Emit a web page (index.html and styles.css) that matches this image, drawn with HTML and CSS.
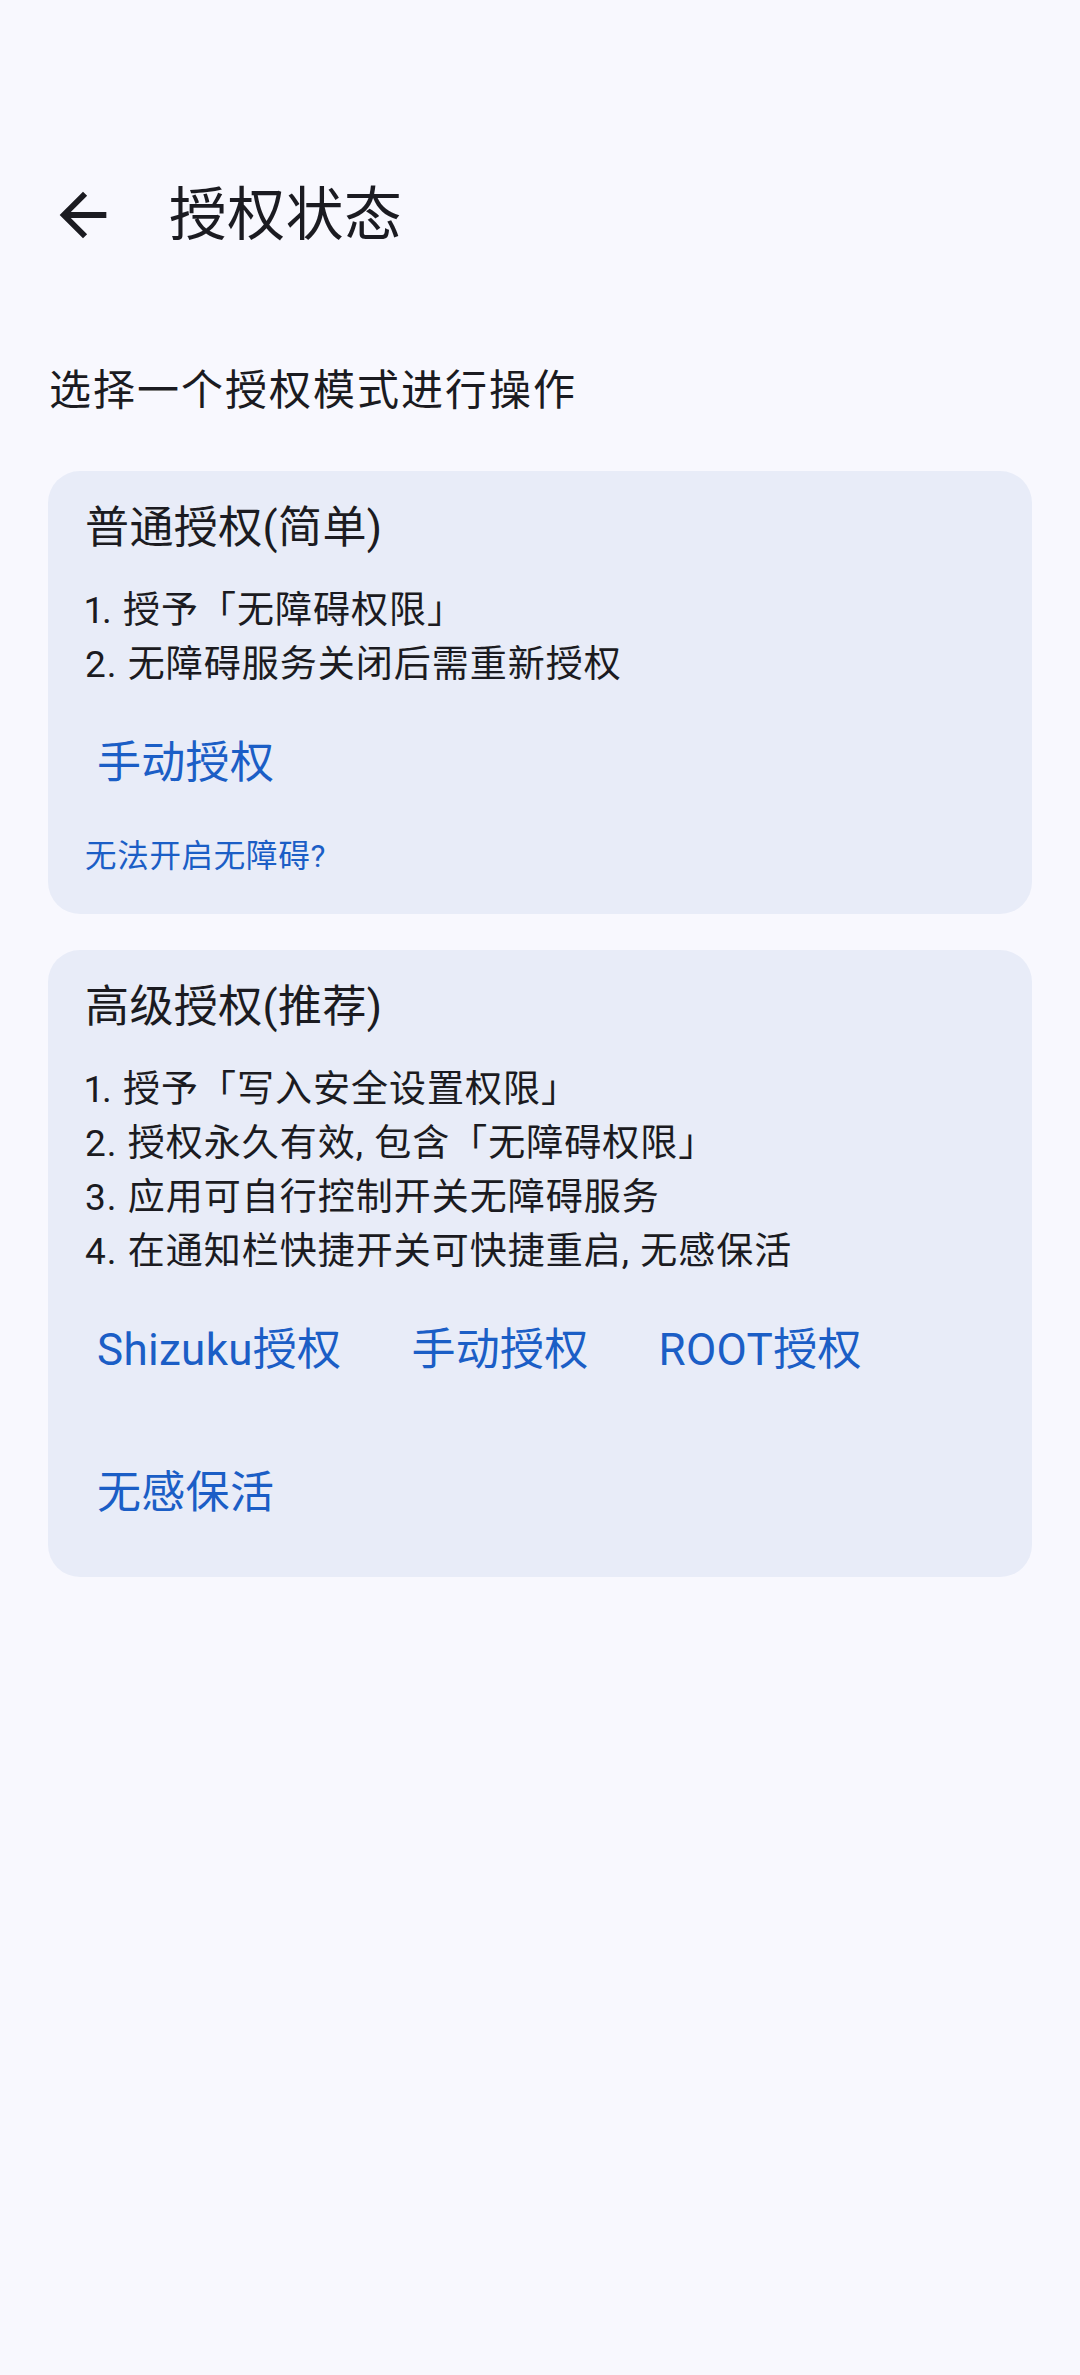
FILE: index.html
```html
<!DOCTYPE html>
<html lang="zh-CN">
<head>
<meta charset="utf-8">
<meta name="viewport" content="width=1080">
<title>授权状态</title>
<link rel="stylesheet" href="styles.css">
</head>
<body>
<header class="topbar">
  <button class="back" aria-label="返回">
    <svg viewBox="0 0 24 24" width="70" height="70"><path d="M20 11H7.83l5.59-5.59L12 4l-8 8 8 8 1.41-1.41L7.83 13H20v-2z"/></svg>
  </button>
  <h1 class="title">授权状态</h1>
</header>
<main class="content">
  <p class="lead">选择一个授权模式进行操作</p>

  <section class="card">
    <h2 class="card-title">普通授权(简单)</h2>
    <ul class="list">
      <li>1. 授予「无障碍权限」</li>
      <li>2. 无障碍服务关闭后需重新授权</li>
    </ul>
    <div class="actions">
      <button class="btn">手动授权</button>
    </div>
    <p class="help">无法开启无障碍?</p>
  </section>

  <section class="card">
    <h2 class="card-title">高级授权(推荐)</h2>
    <ul class="list">
      <li>1. 授予「写入安全设置权限」</li>
      <li>2. 授权永久有效, 包含「无障碍权限」</li>
      <li>3. 应用可自行控制开关无障碍服务</li>
      <li>4. 在通知栏快捷开关可快捷重启, 无感保活</li>
    </ul>
    <div class="actions">
      <button class="btn">Shizuku授权</button>
      <button class="btn">手动授权</button>
      <button class="btn">ROOT授权</button>
      <button class="btn">无感保活</button>
    </div>
  </section>
</main>
</body>
</html>
```

FILE: styles.css
```css
html, body {
  margin: 0;
  padding: 0;
}

body {
  width: 1080px;
  min-height: 2375px;
  background: #F8F8FE;
  color: #1B1B21;
  font-family: Roboto, "Noto Sans CJK SC", sans-serif;
}

.topbar {
  display: flex;
  align-items: center;
  height: 126px;
  margin-top: 152px;
}

.back {
  width: 70px;
  height: 70px;
  margin-left: 48px;
  padding: 0;
  border: 0;
  background: none;
  display: flex;
}

.back svg {
  display: block;
  fill: #1B1B21;
}

.title {
  margin: 0 0 0 51px;
  font-size: 57.75px;
  font-weight: 400;
  line-height: 76px;
  letter-spacing: 0.6px;
}

.content {
  padding: 0 48px;
}

.lead {
  margin: 85px 0 52px;
  font-size: 42px;
  line-height: 56px;
  letter-spacing: 2px;
  padding-left: 1px;
}

.card {
  background: #E8ECF8;
  border-radius: 32px;
  padding: 28px 37px 36px;
  margin-bottom: 36px;
}

.card-title {
  margin: 0;
  font-size: 44px;
  font-weight: 400;
  line-height: 58px;
  letter-spacing: 0.4px;
}

.list {
  list-style: none;
  margin: 27px 0 0;
  padding: 0;
  font-size: 37px;
  line-height: 54px;
  letter-spacing: 1px;
  font-variant-numeric: proportional-nums;
}

.actions {
  margin-top: 23px;
  display: flex;
  flex-wrap: wrap;
  column-gap: 46px;
  row-gap: 47px;
}

.btn {
  height: 96px;
  padding: 0 12px;
  border: 0;
  border-radius: 48px;
  background: none;
  color: #1B5EC6;
  font-family: Roboto, "Noto Sans CJK SC", sans-serif;
  font-size: 44px;
  line-height: 96px;
  letter-spacing: 0.3px;
  display: flex;
  align-items: center;
}

.help {
  margin: 25px 0 0;
  font-size: 31.5px;
  line-height: 42px;
  letter-spacing: 0.7px;
  color: #1B5EC6;
}
```
